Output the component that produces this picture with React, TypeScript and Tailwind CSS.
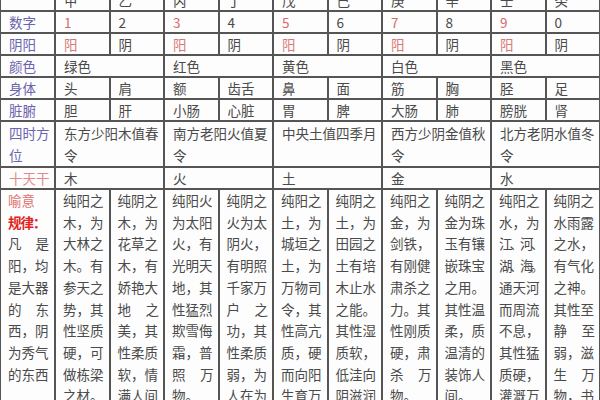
import React from 'react';

const stems = ['甲', '乙', '丙', '丁', '戊', '己', '庚', '辛', '壬', '癸'];
const numbers = ['1', '2', '3', '4', '5', '6', '7', '8', '9', '0'];
const body = ['头', '肩', '额', '齿舌', '鼻', '面', '筋', '胸', '胫', '足'];
const organs = ['胆', '肝', '小肠', '心脏', '胃', '脾', '大肠', '肺', '膀胱', '肾'];
const colours = ['绿色', '红色', '黄色', '白色', '黑色'];
const seasons = ['东方少阳木值春令', '南方老阳火值夏令', '中央土值四季月', '西方少阴金值秋令', '北方老阴水值冬令'];
const elements = ['木', '火', '土', '金', '水'];

// each meaning column, already broken into the lines of the picture
const meanings: string[][] = [
  ['纯阳之', '木，为', '大林之', '木。有', '参天之', '势，其', '性坚质', '硬，可', '做栋梁', '之材。'],
  ['纯阴之', '木，为', '花草之', '木，有', '娇艳大', '地之', '美，其', '性柔质', '软，情', '满人间'],
  ['纯阳火', '为太阳', '火，有', '光明天', '地，其', '性猛烈', '欺雪侮', '霜，普', '照万', '物。'],
  ['纯阴之', '火为太', '阴火，', '有明照', '千家万', '户之', '功，其', '性柔质', '弱，为', '人在为'],
  ['纯阳之', '土，为', '城垣之', '土，为', '万物司', '令，其', '性高亢', '质，硬', '而向阳', '生育万'],
  ['纯阴之', '土，为', '田园之', '土有培', '木止水', '之能。', '其性湿', '质软，', '低洼向', '阴滋润'],
  ['纯阳之', '金，为', '剑铁，', '有刚健', '肃杀之', '力。其', '性刚质', '硬，肃', '杀万', '物。'],
  ['纯阴之', '金为珠', '玉有镶', '嵌珠宝', '之用。', '其性温', '柔，质', '温清的', '装饰人', '间。'],
  ['纯阳之', '水，为', '江、河、', '湖、海。', '通天河', '而周流', '不息，', '其性猛', '质硬，', '灌溉万'],
  ['纯阴之', '水雨露', '之水，', '有气化', '之神。', '其性至', '静至', '弱，滋', '生万', '物，书'],
];

const rule = ['凡是', '阳，均', '是大器', '的东', '西，阴', '为秀气', '的东西'];

const Cell: React.FC<{ className?: string; children?: React.ReactNode }> = ({ className = '', children }) => (
  <div className={`bg-[#fdfdfd] flex items-center pl-[8px] pr-[4px] h-[20px] ${className}`}>{children}</div>
);

const Label: React.FC<{ children: React.ReactNode; className?: string }> = ({ children, className = '' }) => (
  <Cell className={`text-[#6a63ad] ${className}`}>{children}</Cell>
);

const Lines: React.FC<{ lines: string[] }> = ({ lines }) => (
  <>
    {lines.map((l, i) => (
      <div
        key={i}
        className={
          i < lines.length - 1 && l.length < 3
            ? 'text-justify [text-align-last:justify]'
            : l.length > 3
              ? 'whitespace-nowrap tracking-[-3px]'
              : 'whitespace-nowrap'
        }
      >
        {l}
      </div>
    ))}
  </>
);

export default function App() {
  return (
    <div className="w-[600px] h-[400px] overflow-hidden bg-white">
      <div
        className="-mt-[10px] grid grid-cols-[53px_repeat(10,52.5px)] gap-[2px] px-[1px] bg-[#555555] text-[13.5px] leading-[22px] text-[#4a4a4a]"
        style={{ fontFamily: '"Noto Sans CJK SC", "Noto Sans", sans-serif' }}
      >
        {/* 天干 header, cut by the top edge */}
        <Cell />
        {stems.map((s) => (
          <Cell key={s}>{s}</Cell>
        ))}

        <Label>数字</Label>
        {numbers.map((n, i) => (
          <Cell key={n} className={i % 2 === 0 ? 'text-[#d66a6a]' : ''}>
            {n}
          </Cell>
        ))}

        <Label>阴阳</Label>
        {numbers.map((n, i) => (
          <Cell key={n} className={i % 2 === 0 ? 'text-[#d97878]' : ''}>
            {i % 2 === 0 ? '阳' : '阴'}
          </Cell>
        ))}

        <Label>颜色</Label>
        {colours.map((c) => (
          <Cell key={c} className="col-span-2">
            {c}
          </Cell>
        ))}

        <Label>身体</Label>
        {body.map((b) => (
          <Cell key={b}>{b}</Cell>
        ))}

        <Label>脏腑</Label>
        {organs.map((o) => (
          <Cell key={o}>{o}</Cell>
        ))}

        <Label className="h-[44px] items-start">
          四时方
          <br />
          位
        </Label>
        {seasons.map((s) => (
          <Cell key={s} className="col-span-2 h-[44px] items-start">
            {s}
          </Cell>
        ))}

        <Cell className="text-[#e08a8a]">十天干</Cell>
        {elements.map((e) => (
          <Cell key={e} className="col-span-2">
            {e}
          </Cell>
        ))}

        {/* 喻意 */}
        <div className="bg-[#fdfdfd] h-[240px] pl-[7px] pr-[5px] leading-[21.7px]">
          <div className="text-[#e07070]">喻意</div>
          <div className="text-[#e02424] font-bold whitespace-nowrap tracking-[-1px]">规律：</div>
          <Lines lines={rule} />
        </div>
        {meanings.map((m, i) => (
          <div key={i} className="bg-[#fdfdfd] h-[240px] pl-[7px] pr-[4px] leading-[21.7px]">
            <Lines lines={m} />
          </div>
        ))}
      </div>
    </div>
  );
}
